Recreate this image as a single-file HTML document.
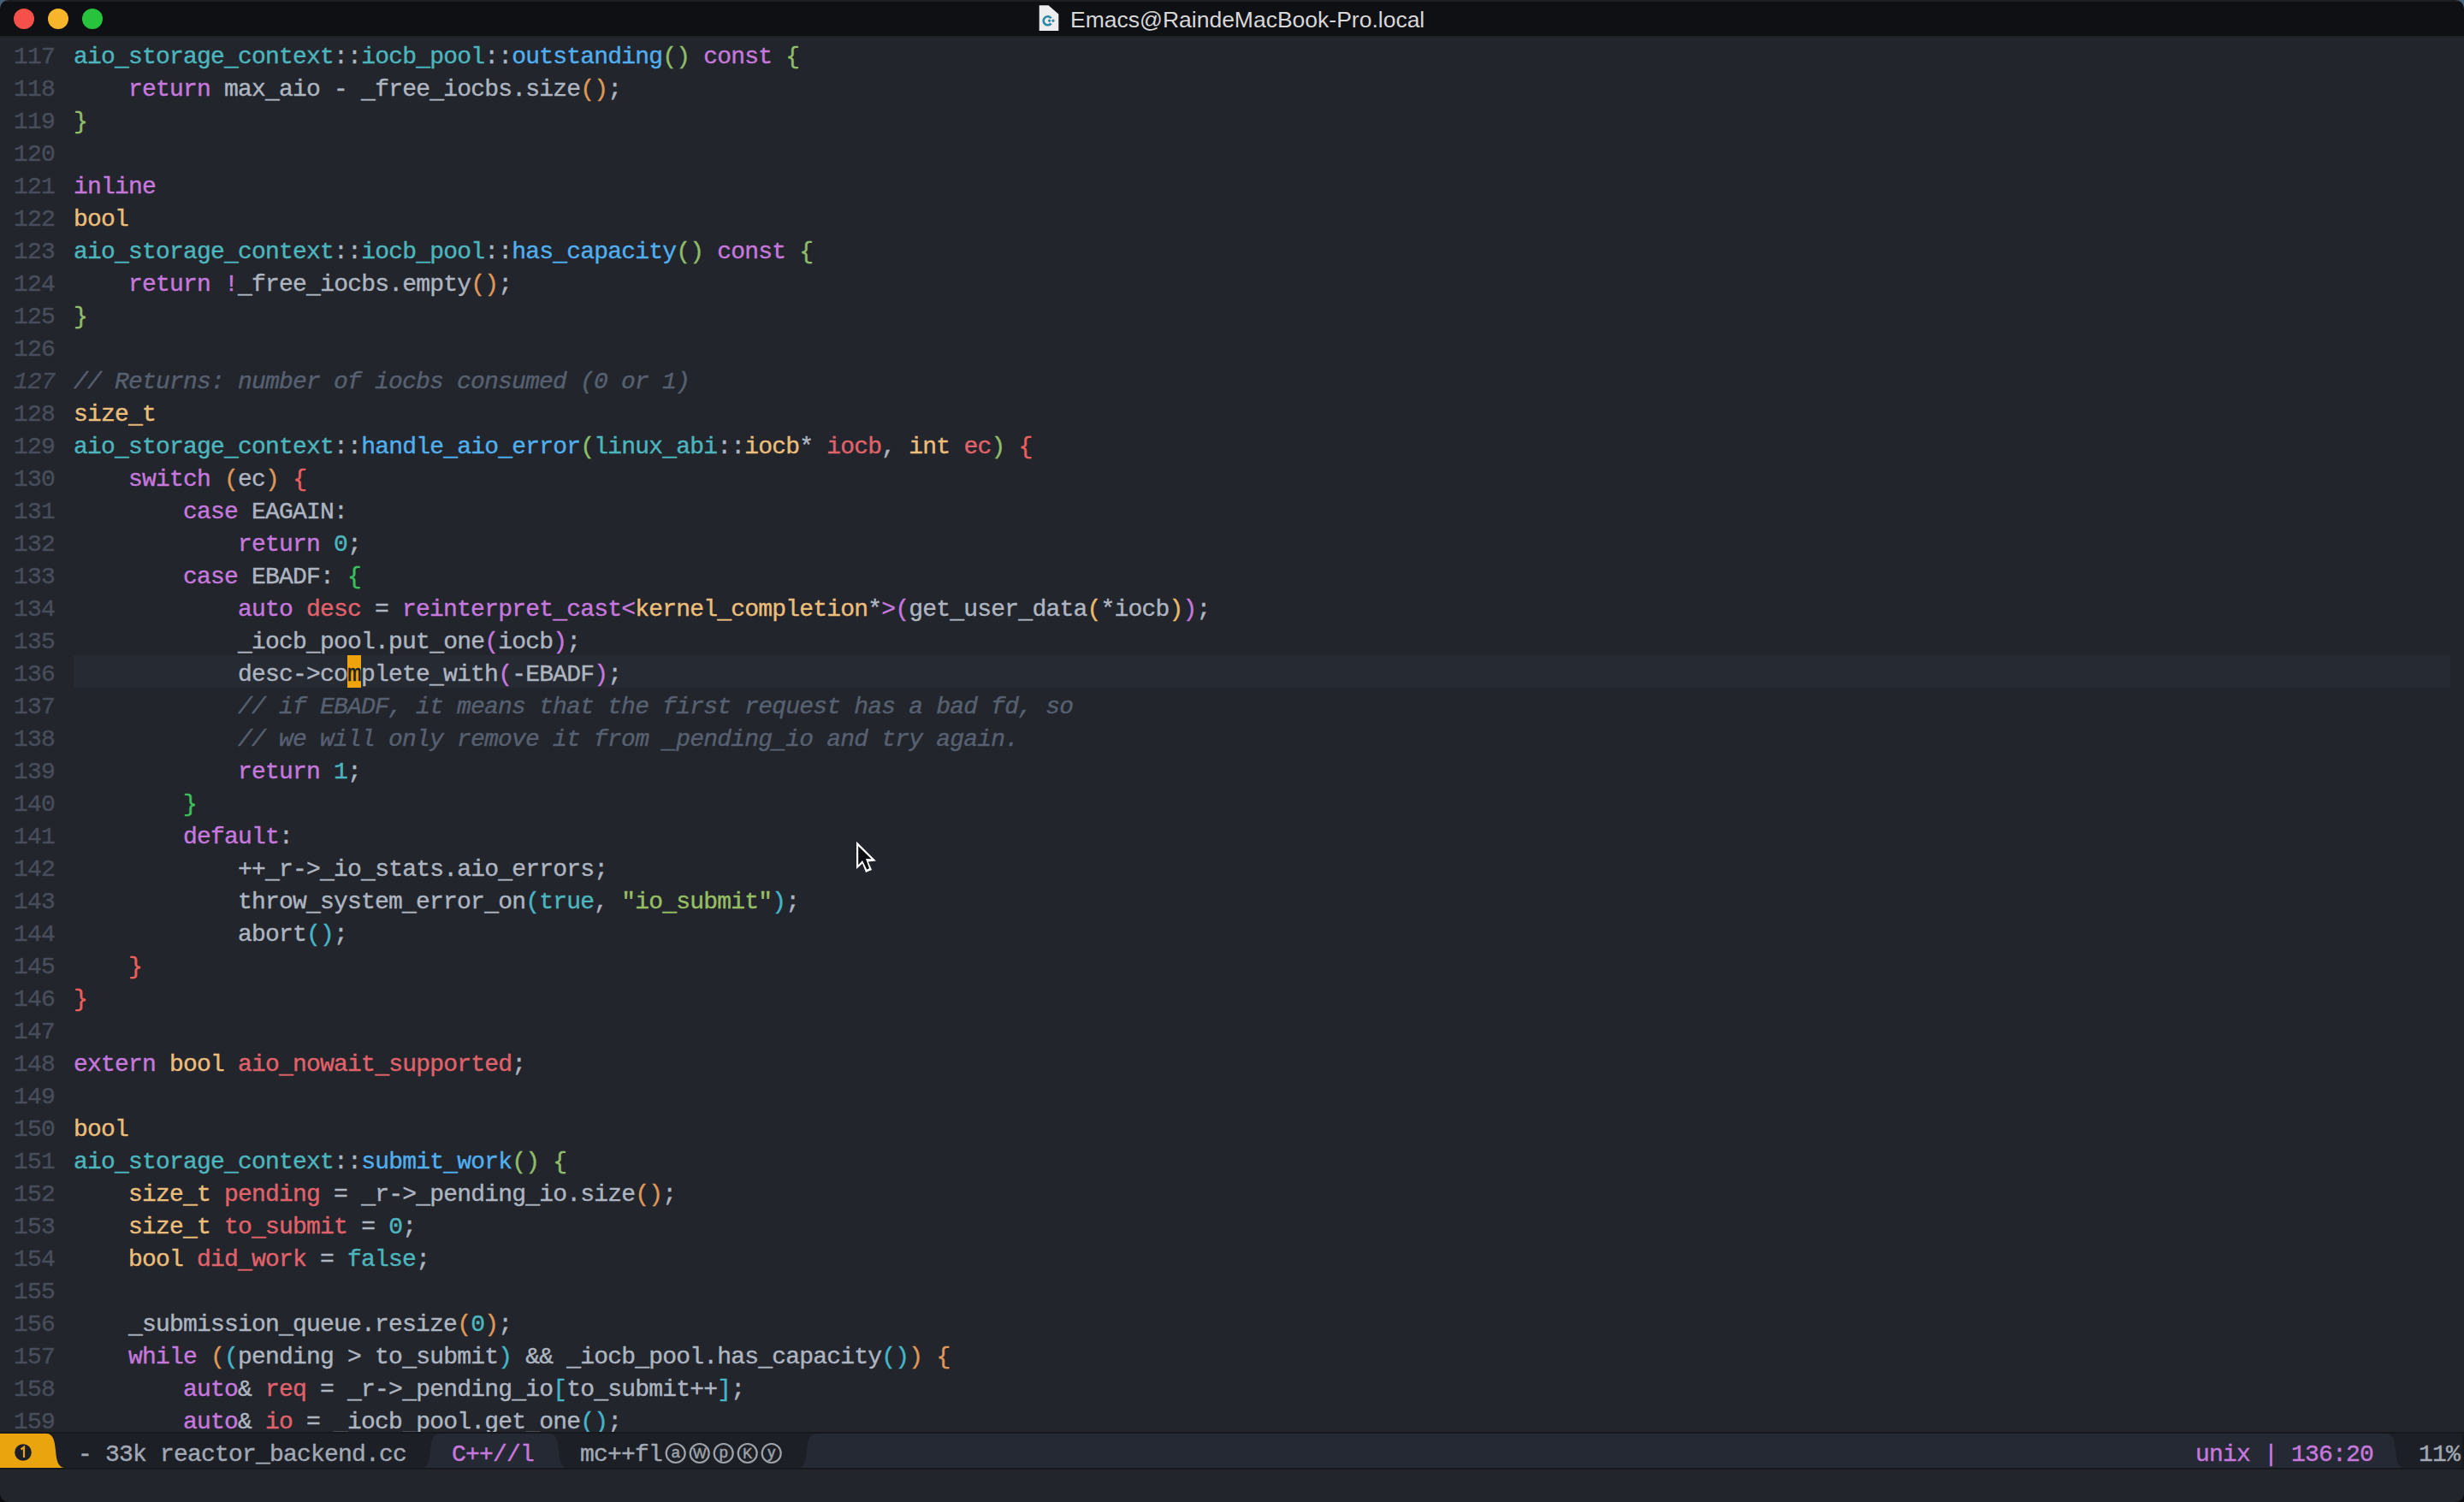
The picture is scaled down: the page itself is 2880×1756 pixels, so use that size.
<!DOCTYPE html>
<html><head><meta charset="utf-8"><style>
html,body{margin:0;padding:0;}
body{width:2880px;height:1756px;overflow:hidden;position:relative;background:#22252c;font-family:"Liberation Mono",monospace;}
#title{position:absolute;left:0;top:0;width:2880px;height:42px;background:#0f1013;border-bottom:2px solid #1f2126;}
#ttop{position:absolute;left:0;top:0;width:2880px;height:2px;background:#1c1e22;}
.corner{position:absolute;width:10px;height:10px;}
#title .tl{position:absolute;top:10px;width:24px;height:24px;border-radius:50%;}
#title .ttxt{position:absolute;left:1251px;top:8px;font-family:"Liberation Sans",sans-serif;font-size:26.5px;line-height:30px;color:#d7d7d8;white-space:pre;}
#hl{position:absolute;left:86px;top:766px;width:2778px;height:38px;background:#262a32;}
.row{position:absolute;left:0;width:2880px;height:38px;line-height:38px;font-size:28px;letter-spacing:-0.8px;-webkit-text-stroke:0.4px currentColor;white-space:pre;color:#aeb5c1;}
.num{position:absolute;left:16px;top:0;color:#474d5b;}
.num.ci{font-style:italic;}
.code{position:absolute;left:86px;top:0;}
i{font-style:normal;}
u{text-decoration:none;position:relative;top:1.5px;}
.k{color:#c678dd;}
.t{color:#ecbe7b;}
.n{color:#4db5bd;}
.f{color:#51afef;}
.v{color:#e0626b;}
.c{color:#576070;font-style:italic;}
.s{color:#98be65;}
.bang{color:#b9a0c8;}
.pg{color:#8fbd6a;}
.po{color:#df9858;}
.py{color:#e9bb6d;}
.pr{color:#ec5f5f;}
.pb{color:#3ac05a;}
.pm{color:#c678dd;}
.pt{color:#46b5c8;}
.cur{color:#1c1f24;}
#cursor{position:absolute;left:406px;top:766px;width:16px;height:38px;background:#f0a30a;}
#ml{position:absolute;left:0;top:1674px;width:2880px;height:44px;background:#16181c;}
.mlt{position:absolute;top:7.5px;height:38px;line-height:38px;font-size:28px;letter-spacing:-0.8px;-webkit-text-stroke:0.4px currentColor;white-space:pre;}
#echo{position:absolute;left:0;top:1718px;width:2880px;height:38px;background:#22252c;}
</style></head><body>
<div id="title">
<div class="tl" style="left:16px;background:#f5504a"></div>
<div class="tl" style="left:56px;background:#f7b52c"></div>
<div class="tl" style="left:96px;background:#28c33c"></div>
<svg style="position:absolute;left:1214px;top:6px" width="24" height="30" viewBox="0 0 24 30">
<path d="M0.7 0.3 H11.5 L23.3 10.4 V29.9 H0.7 Z" fill="#ededef"/>
<path d="M14.6 15.2 A5 5 0 1 0 14.6 21.4" fill="none" stroke="#2b87a6" stroke-width="2.6"/>
<path d="M12.6 16.6 V20 M10.9 18.3 H14.3 M16.9 16.6 V20 M15.2 18.3 H18.6" stroke="#2b87a6" stroke-width="1.5"/>
</svg>
<div class="ttxt">Emacs@RaindeMacBook-Pro.local</div>
</div>
<div id="hl"></div>
<div id="cursor"></div>
<div class="row" style="top:48px"><span class="num">117</span><span class="code"><i class="n">aio<u>_</u>storage<u>_</u>context</i>::<i class="n">iocb<u>_</u>pool</i>::<i class="f">outstanding</i><i class="pg">()</i> <i class="k">const</i> <i class="pg">{</i></span></div>
<div class="row" style="top:86px"><span class="num">118</span><span class="code">    <i class="k">return</i> max<u>_</u>aio - <u>_</u>free<u>_</u>iocbs.size<i class="po">()</i>;</span></div>
<div class="row" style="top:124px"><span class="num">119</span><span class="code"><i class="pg">}</i></span></div>
<div class="row" style="top:162px"><span class="num">120</span><span class="code"></span></div>
<div class="row" style="top:200px"><span class="num">121</span><span class="code"><i class="k">inline</i></span></div>
<div class="row" style="top:238px"><span class="num">122</span><span class="code"><i class="t">bool</i></span></div>
<div class="row" style="top:276px"><span class="num">123</span><span class="code"><i class="n">aio<u>_</u>storage<u>_</u>context</i>::<i class="n">iocb<u>_</u>pool</i>::<i class="f">has<u>_</u>capacity</i><i class="pg">()</i> <i class="k">const</i> <i class="pg">{</i></span></div>
<div class="row" style="top:314px"><span class="num">124</span><span class="code">    <i class="k">return</i> <i class="k">!</i><u>_</u>free<u>_</u>iocbs.empty<i class="po">()</i>;</span></div>
<div class="row" style="top:352px"><span class="num">125</span><span class="code"><i class="pg">}</i></span></div>
<div class="row" style="top:390px"><span class="num">126</span><span class="code"></span></div>
<div class="row" style="top:428px"><span class="num ci">127</span><span class="code"><i class="c">// Returns: number of iocbs consumed (0 or 1)</i></span></div>
<div class="row" style="top:466px"><span class="num">128</span><span class="code"><i class="t">size<u>_</u>t</i></span></div>
<div class="row" style="top:504px"><span class="num">129</span><span class="code"><i class="n">aio<u>_</u>storage<u>_</u>context</i>::<i class="f">handle<u>_</u>aio<u>_</u>error</i><i class="pg">(</i><i class="n">linux<u>_</u>abi</i>::<i class="t">iocb</i>* <i class="v">iocb</i>, <i class="t">int</i> <i class="v">ec</i><i class="pg">)</i> <i class="pr">{</i></span></div>
<div class="row" style="top:542px"><span class="num">130</span><span class="code">    <i class="k">switch</i> <i class="po">(</i>ec<i class="po">)</i> <i class="pr">{</i></span></div>
<div class="row" style="top:580px"><span class="num">131</span><span class="code">        <i class="k">case</i> EAGAIN:</span></div>
<div class="row" style="top:618px"><span class="num">132</span><span class="code">            <i class="k">return</i> <i class="n">0</i>;</span></div>
<div class="row" style="top:656px"><span class="num">133</span><span class="code">        <i class="k">case</i> EBADF: <i class="pb">{</i></span></div>
<div class="row" style="top:694px"><span class="num">134</span><span class="code">            <i class="k">auto</i> <i class="v">desc</i> = <i class="k">reinterpret<u>_</u>cast</i><i class="pm">&lt;</i><i class="t">kernel<u>_</u>completion</i>*<i class="pm">&gt;</i><i class="pm">(</i>get<u>_</u>user<u>_</u>data<i class="py">(</i>*iocb<i class="py">)</i><i class="pm">)</i>;</span></div>
<div class="row" style="top:732px"><span class="num">135</span><span class="code">            <u>_</u>iocb<u>_</u>pool.put<u>_</u>one<i class="pm">(</i>iocb<i class="pm">)</i>;</span></div>
<div class="row" style="top:770px"><span class="num">136</span><span class="code">            desc-&gt;co<i class="cur">m</i>plete<u>_</u>with<i class="pm">(</i>-EBADF<i class="pm">)</i>;</span></div>
<div class="row" style="top:808px"><span class="num">137</span><span class="code">            <i class="c">// if EBADF, it means that the first request has a bad fd, so</i></span></div>
<div class="row" style="top:846px"><span class="num">138</span><span class="code">            <i class="c">// we will only remove it from <u>_</u>pending<u>_</u>io and try again.</i></span></div>
<div class="row" style="top:884px"><span class="num">139</span><span class="code">            <i class="k">return</i> <i class="n">1</i>;</span></div>
<div class="row" style="top:922px"><span class="num">140</span><span class="code">        <i class="pb">}</i></span></div>
<div class="row" style="top:960px"><span class="num">141</span><span class="code">        <i class="k">default</i>:</span></div>
<div class="row" style="top:998px"><span class="num">142</span><span class="code">            ++<u>_</u>r-&gt;<u>_</u>io<u>_</u>stats.aio<u>_</u>errors;</span></div>
<div class="row" style="top:1036px"><span class="num">143</span><span class="code">            throw<u>_</u>system<u>_</u>error<u>_</u>on<i class="pt">(</i><i class="n">true</i>, <i class="s">"io<u>_</u>submit"</i><i class="pt">)</i>;</span></div>
<div class="row" style="top:1074px"><span class="num">144</span><span class="code">            abort<i class="pt">()</i>;</span></div>
<div class="row" style="top:1112px"><span class="num">145</span><span class="code">    <i class="pr">}</i></span></div>
<div class="row" style="top:1150px"><span class="num">146</span><span class="code"><i class="pr">}</i></span></div>
<div class="row" style="top:1188px"><span class="num">147</span><span class="code"></span></div>
<div class="row" style="top:1226px"><span class="num">148</span><span class="code"><i class="k">extern</i> <i class="t">bool</i> <i class="v">aio<u>_</u>nowait<u>_</u>supported</i>;</span></div>
<div class="row" style="top:1264px"><span class="num">149</span><span class="code"></span></div>
<div class="row" style="top:1302px"><span class="num">150</span><span class="code"><i class="t">bool</i></span></div>
<div class="row" style="top:1340px"><span class="num">151</span><span class="code"><i class="n">aio<u>_</u>storage<u>_</u>context</i>::<i class="f">submit<u>_</u>work</i><i class="pg">()</i> <i class="pg">{</i></span></div>
<div class="row" style="top:1378px"><span class="num">152</span><span class="code">    <i class="t">size<u>_</u>t</i> <i class="v">pending</i> = <u>_</u>r-&gt;<u>_</u>pending<u>_</u>io.size<i class="po">()</i>;</span></div>
<div class="row" style="top:1416px"><span class="num">153</span><span class="code">    <i class="t">size<u>_</u>t</i> <i class="v">to<u>_</u>submit</i> = <i class="n">0</i>;</span></div>
<div class="row" style="top:1454px"><span class="num">154</span><span class="code">    <i class="t">bool</i> <i class="v">did<u>_</u>work</i> = <i class="n">false</i>;</span></div>
<div class="row" style="top:1492px"><span class="num">155</span><span class="code"></span></div>
<div class="row" style="top:1530px"><span class="num">156</span><span class="code">    <u>_</u>submission<u>_</u>queue.resize<i class="po">(</i><i class="n">0</i><i class="po">)</i>;</span></div>
<div class="row" style="top:1568px"><span class="num">157</span><span class="code">    <i class="k">while</i> <i class="po">(</i><i class="pt">(</i>pending &gt; to<u>_</u>submit<i class="pt">)</i> &amp;&amp; <u>_</u>iocb<u>_</u>pool.has<u>_</u>capacity<i class="pt">()</i><i class="po">)</i> <i class="po">{</i></span></div>
<div class="row" style="top:1606px"><span class="num">158</span><span class="code">        <i class="k">auto</i>&amp; <i class="v">req</i> = <u>_</u>r-&gt;<u>_</u>pending<u>_</u>io<i class="pt">[</i>to<u>_</u>submit++<i class="pt">]</i>;</span></div>
<div class="row" style="top:1644px"><span class="num">159</span><span class="code">        <i class="k">auto</i>&amp; <i class="v">io</i> = <u>_</u>iocb<u>_</u>pool.get<u>_</u>one<i class="pt">()</i>;</span></div>
<div id="ml">
<svg style="position:absolute;left:0;top:0" width="2880" height="44" viewBox="0 0 2880 44">
<rect x="0" y="0" width="2880" height="44" fill="#16181c"/>
<rect x="0" y="2" width="2878" height="40" fill="#1c1f26"/>
<path d="M0 2 H54 C62 2, 64 10, 65 22 C66 34, 68 42, 76 42 H0 Z" fill="#e9a40e"/>
<path d="M492 42 C500 42, 502 34, 503 22 C504 10, 506 2, 514 2 H642 C650 2, 652 10, 653 22 C654 34, 656 42, 664 42 Z" fill="#252933"/>
<path d="M932 42 C940 42, 942 34, 943 22 C944 10, 946 2, 954 2 H2789 C2797 2, 2799 10, 2800 22 C2801 34, 2803 42, 2811 42 Z" fill="#252933"/>
<circle cx="27" cy="24" r="9.8" fill="#1c1f26"/>
<path d="M24.5 20.5 L28 18 V30" fill="none" stroke="#e9a40e" stroke-width="2.2"/>
</svg>
<div class="mlt" style="left:91px;color:#a2a9b4">- 33k reactor_backend.cc</div>
<div class="mlt" style="left:528px;color:#c678dd">C++//l</div>
<div class="mlt" style="left:678px;color:#a2a9b4">mc++fl</div>
<svg style="position:absolute;left:770px;top:0" width="150" height="44" viewBox="0 0 150 44">
<g fill="none" stroke="#9ea3ab" stroke-width="2.2"><circle cx="19.7" cy="25" r="11"/><circle cx="47.7" cy="25" r="11"/><circle cx="75.7" cy="25" r="11"/><circle cx="103.7" cy="25" r="11"/><circle cx="131.7" cy="25" r="11"/></g>
<g fill="#9ea3ab" font-family="Liberation Sans" font-size="18" text-anchor="middle" stroke="#9ea3ab" stroke-width="0.5"><text x="19.7" y="30">a</text><text x="47.7" y="31" font-size="16.5">W</text><text x="75.7" y="30">p</text><text x="103.7" y="31" font-size="16.5">K</text><text x="131.7" y="30">y</text></g>
</svg>
<div class="mlt" style="left:2566px;color:#c678dd">unix | 136:20</div>
<div class="mlt" style="left:2827px;color:#a2a9b4">11%</div>
</div>
<div id="echo"></div>
<svg style="position:absolute;left:995px;top:980px" width="35" height="45" viewBox="0 0 35 45">
<path d="M6 3.8 L6 35.9 L13 29.6 L17 39.9 L24 36.9 L19.8 27.4 L28.9 26.6 Z" fill="#ffffff"/>
<path d="M8.2 9.2 L8.2 31.2 L13 26 L18.2 36.5 L21 35.3 L17 24 L23.4 24.2 Z" fill="#0c0d10"/>
</svg>
<div id="ttop"></div>
<svg class="corner" style="left:0;top:0" viewBox="0 0 10 10"><path d="M0 0 H10 A10 10 0 0 0 0 10 Z" fill="#46607a"/></svg>
<svg class="corner" style="left:2870px;top:0" viewBox="0 0 10 10"><path d="M10 0 H0 A10 10 0 0 1 10 10 Z" fill="#46607a"/></svg>
<svg class="corner" style="left:0;top:1746px" viewBox="0 0 10 10"><path d="M0 10 H10 A10 10 0 0 1 0 0 Z" fill="#0c0d10"/></svg>
<svg class="corner" style="left:2870px;top:1746px" viewBox="0 0 10 10"><path d="M10 10 H0 A10 10 0 0 0 10 0 Z" fill="#0c0d10"/></svg>
</body></html>
